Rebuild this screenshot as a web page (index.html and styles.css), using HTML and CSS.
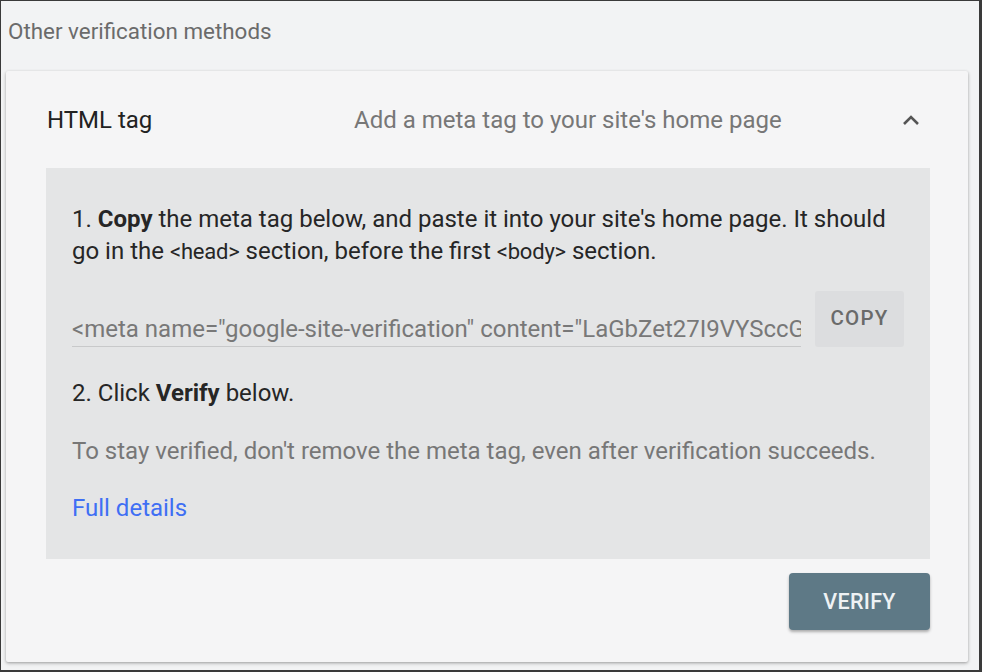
FILE: index.html
```html
<!DOCTYPE html>
<html>
<head>
  <meta charset="UTF-8">
  <title>Other verification methods</title>
  <link rel="stylesheet" href="styles.css">
</head>
<body>
  <div class="frame">
    <div class="section-title">Other verification methods</div>

    <div class="method-card">
      <div class="method-header">
        <div class="method-name">HTML tag</div>
        <div class="method-desc">Add a meta tag to your site's home page</div>
        <div class="method-toggle">
          <svg width="18" height="12" viewBox="0 0 18 12">
            <path d="M2 10 L9 3 L16 10" fill="none" stroke="#555" stroke-width="2.6"/>
          </svg>
        </div>
      </div>

      <div class="method-body">
        <p class="step">1. <b>Copy</b> the meta tag below, and paste it into your site's home page. It should go in the <span class="code">&lt;head&gt;</span> section, before the first <span class="code">&lt;body&gt;</span> section.</p>

        <div class="tag-row">
          <div class="tag-field">&lt;meta name="google-site-verification" content="LaGbZet27I9VYSccGx1bVq0M2hTz8wOq5pN" /&gt;</div>
          <button class="copy-btn">COPY</button>
        </div>

        <p class="step step-two">2. Click <b>Verify</b> below.</p>

        <p class="note">To stay verified, don't remove the meta tag, even after verification succeeds.</p>

        <a class="details-link" href="#">Full details</a>
      </div>

      <div class="method-actions">
        <button class="verify-btn">VERIFY</button>
      </div>
    </div>
  </div>
</body>
</html>
```

FILE: styles.css
```css
html, body {
  margin: 0;
  height: 100%;
}

body {
  font-family: Roboto, 'Noto Sans', sans-serif;
  background-color: #3a3a3a;
}

.frame {
  box-sizing: border-box;
  height: 100%;
  border-style: solid;
  border-color: #3a3a3a;
  border-width: 1px 3px 2px 1px;
  background-color: #f2f3f4;
  padding: 0 0 0 5px;
  display: flex;
  flex-direction: column;
}

.section-title {
  font-size: 22.4px;
  color: #6b6b6b;
  height: 60px;
  line-height: 60px;
  padding-left: 2px;
  margin-bottom: 10px;
}

.method-card {
  width: 962px;
  height: 591px;
  box-sizing: border-box;
  background-color: #f5f5f6;
  box-shadow: 0 1px 3px rgba(0, 0, 0, 0.3), 0 2px 5px rgba(0, 0, 0, 0.08);
  border-radius: 2px;
}

.method-header {
  height: 97px;
  display: flex;
  align-items: center;
  padding-left: 41px;
  font-size: 24px;
}

.method-name {
  color: #222;
  width: 307px;
}

.method-desc {
  color: #777;
  width: 548px;
}

.method-toggle {
  width: 18px;
  height: 12px;
  display: flex;
}

.method-body {
  margin: 0 38px 0 40px;
  padding: 35px 26px 35px 26px;
  background-color: #e4e5e6;
  font-size: 24px;
  line-height: 32px;
  color: #262626;
}

.step {
  margin: 0;
}

.step b {
  font-weight: 700;
}

.code {
  font-size: 22px;
  letter-spacing: -0.2px;
}

.tag-row {
  display: flex;
  align-items: flex-start;
  margin-top: 23px;
}

.tag-field {
  width: 729px;
  flex-shrink: 0;
  margin-top: 22px;
  padding-bottom: 1px;
  line-height: 32px;
  white-space: nowrap;
  overflow: hidden;
  color: #787878;
  border-bottom: 1px solid #c8c9ca;
}

.copy-btn {
  margin-left: 14px;
  width: 89px;
  height: 56px;
  flex-shrink: 0;
  border: none;
  border-radius: 3px;
  background-color: #dcdddf;
  color: #6a6a6a;
  font-family: Roboto, sans-serif;
  font-size: 20.5px;
  font-weight: 500;
  letter-spacing: 1.2px;
  padding: 0 0 2px;
}

.step-two {
  margin-top: 30px;
}

.note {
  margin: 26px 0 0;
  color: #777;
}

.details-link {
  display: inline-block;
  margin-top: 25px;
  color: #3f6ff4;
  text-decoration: none;
}

.method-actions {
  display: flex;
  justify-content: flex-end;
  margin: 14px 38px 0 0;
}

.verify-btn {
  width: 141px;
  height: 57px;
  border: none;
  border-radius: 4px;
  background-color: #5e7986;
  color: #eef2f4;
  font-family: Roboto, sans-serif;
  font-size: 21.5px;
  font-weight: 500;
  letter-spacing: 0.3px;
  box-shadow: 0 2px 3px rgba(0, 0, 0, 0.3);
}
```
